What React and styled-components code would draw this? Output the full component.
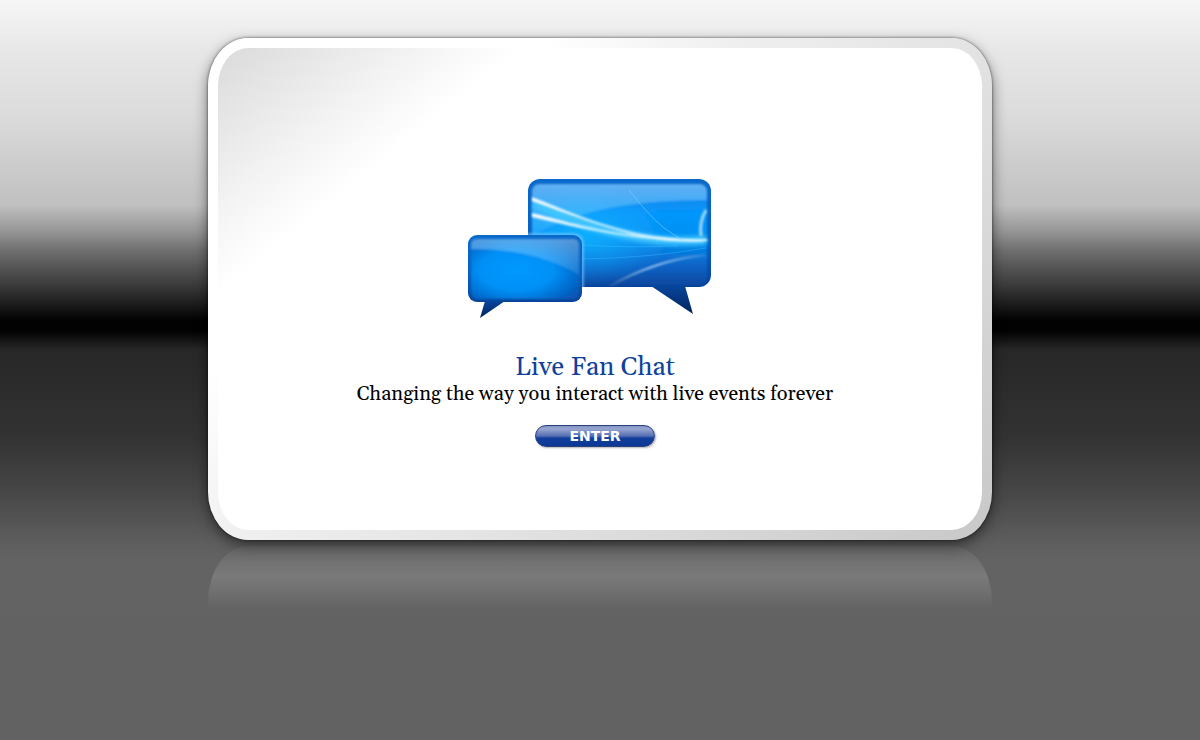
import React from "react";
import styled, { createGlobalStyle } from "styled-components";

const GlobalStyle = createGlobalStyle`
  body {
    margin: 0;
    min-height: 100vh;
    background: #626262 linear-gradient(
      to bottom,
      #f6f6f6 0,
      #e8e8e8 48px,
      #dadada 120px,
      #c0c0c0 205px,
      #989898 230px,
      #6c6c6c 252px,
      #333333 290px,
      #0e0e0e 313px,
      #020202 320px,
      #020202 331px,
      #282828 350px,
      #2b2b2b 380px,
      #333333 438px,
      #484848 495px,
      #5e5e5e 543px,
      #636363 562px,
      #626262 740px
    ) no-repeat;
    font-family: Georgia, Gelasio, 'Liberation Serif', serif;
  }
`;

const Page = styled.div`
  display: flex;
  flex-direction: column;
  align-items: center;
  padding: 38px 16px 0;
`;

const Card = styled.main`
  box-sizing: border-box;
  width: 100%;
  max-width: 784px;
  padding: 10px;
  border-radius: 40px / 48px;
  background: linear-gradient(
    135deg,
    #ffffff 240px,
    #efefef 380px,
    #e4e4e4 540px,
    #cacaca 880px
  );
  box-shadow: 0 0 3px rgba(0, 0, 0, 0.6), 0 5px 14px rgba(0, 0, 0, 0.5);
`;

const Panel = styled.section`
  display: flex;
  flex-direction: column;
  align-items: center;
  padding: 130px 10px 83px 0;
  border-radius: 30px / 38px;
  background: linear-gradient(
    141deg,
    #dcdcdc 10px,
    #e8e8e8 70px,
    #f4f4f4 130px,
    #ffffff 190px
  );
`;

const Logo = styled.svg`
  display: block;
  width: 254px;
  height: 144px;
`;

const Title = styled.h1`
  margin: 32px 0 0;
  font-size: 26px;
  font-weight: normal;
  line-height: 28px;
  color: #0f429b;
`;

const Tagline = styled.p`
  margin: 0;
  font-size: 20px;
  line-height: 24px;
  color: #000;
`;

const EnterButton = styled.button`
  width: 120px;
  height: 22px;
  margin: 19px 0 0;
  padding: 0;
  border: 1px solid #2a417e;
  border-radius: 11px;
  background: linear-gradient(#8794c4 0, #97a5d0 3px, #566eb3 10px, #123f9c 12px, #0b3894 100%);
  box-shadow: 1px 1px 2px rgba(0, 0, 0, 0.3);
  color: #fff;
  font: bold 14px/18px Verdana, 'DejaVu Sans', sans-serif;
  cursor: pointer;
`;

const Reflection = styled.div`
  width: 100%;
  max-width: 784px;
  height: 66px;
  margin-top: 6px;
  border-radius: 40px 40px 0 0 / 56px 56px 0 0;
  background: linear-gradient(
    rgba(255, 255, 255, 0.03) 0,
    rgba(255, 255, 255, 0.15) 30px,
    rgba(255, 255, 255, 0) 64px
  );
`;

function ChatLogo() {
  return (
    <Logo viewBox="0 0 254 144" role="img" aria-label="Live Fan Chat">
      <defs>
        <linearGradient id="big" x1="0" y1="0" x2="0" y2="1">
          <stop offset="0" stopColor="#1a84e6" />
          <stop offset="0.3" stopColor="#0496fb" />
          <stop offset="0.55" stopColor="#0590f2" />
          <stop offset="0.8" stopColor="#0865c8" />
          <stop offset="1" stopColor="#07489f" />
        </linearGradient>
        <radialGradient id="glow" cx="0.3" cy="0.5" r="0.5">
          <stop offset="0" stopColor="#0fb2ff" stopOpacity="0.9" />
          <stop offset="1" stopColor="#12a8ff" stopOpacity="0" />
        </radialGradient>
        <radialGradient id="small" cx="0.42" cy="0.52" r="0.68">
          <stop offset="0" stopColor="#0299ff" />
          <stop offset="0.5" stopColor="#0490f6" />
          <stop offset="1" stopColor="#0756b5" />
        </radialGradient>
        <linearGradient id="rim" x1="0" y1="0" x2="0" y2="1">
          <stop offset="0" stopColor="#0a69ca" />
          <stop offset="0.6" stopColor="#0760c0" />
          <stop offset="1" stopColor="#07439a" />
        </linearGradient>
        <linearGradient id="tail" x1="0" y1="0" x2="0" y2="1">
          <stop offset="0" stopColor="#07459b" />
          <stop offset="1" stopColor="#03235d" />
        </linearGradient>
        <linearGradient id="gloss" x1="0" y1="0" x2="0" y2="1">
          <stop offset="0" stopColor="#a8dcff" stopOpacity="0.5" />
          <stop offset="1" stopColor="#8fd6ff" stopOpacity="0.15" />
        </linearGradient>
        <linearGradient id="ray" x1="0" y1="0" x2="1" y2="0">
          <stop offset="0" stopColor="#fff" stopOpacity="0.95" />
          <stop offset="0.5" stopColor="#d4f2ff" stopOpacity="0.85" />
          <stop offset="1" stopColor="#fff" stopOpacity="0.95" />
        </linearGradient>
        <linearGradient id="arc" x1="0" y1="0" x2="1" y2="0">
          <stop offset="0" stopColor="#fff" stopOpacity="0.05" />
          <stop offset="0.45" stopColor="#bfe4ff" stopOpacity="0.8" />
          <stop offset="1" stopColor="#fff" stopOpacity="0.1" />
        </linearGradient>
        <filter id="halo" x="-10%" y="-30%" width="120%" height="160%">
          <feGaussianBlur stdDeviation="2" />
        </filter>
        <filter id="soft" x="-10%" y="-10%" width="120%" height="120%">
          <feGaussianBlur stdDeviation="0.8" />
        </filter>
        <clipPath id="bigFace">
          <rect x="60" y="1" width="183" height="108" rx="12" />
        </clipPath>
      </defs>

      {/* large bubble */}
      <path d="M183 108H217L225 136Z" fill="url(#tail)" />
      <rect x="60" y="1" width="183" height="108" rx="12" fill="url(#rim)" />
      <g clipPath="url(#bigFace)">
        <g filter="url(#soft)">
          <rect x="64" y="6" width="175" height="101" rx="8" fill="url(#big)" />
          <rect x="64" y="6" width="175" height="101" rx="8" fill="url(#glow)" />
          <path
            d="M64 14Q64 6 72 6H231Q239 6 239 14V22C190 22 140 27 104 40Q78 49 64 58Z"
            fill="url(#gloss)"
          />
        </g>
        <path
          d="M66 26C100 40 135 56 190 62Q215 64 238 62"
          fill="none"
          stroke="#3fc4ff"
          strokeWidth="9"
          filter="url(#halo)"
        />
        <g filter="url(#soft)">
          <path
            d="M64 19C100 33 145 54 195 59Q220 62 239 61V63Q205 65 180 60C140 52 100 36 64 23Z"
            fill="url(#ray)"
          />
          <path
            d="M64 35C100 43 145 60 238 63C175 65 110 50 64 39Z"
            fill="url(#ray)"
          />
          <path
            d="M238 32Q231 44 233 58"
            fill="none"
            stroke="#c9eaff"
            strokeOpacity="0.8"
            strokeWidth="3"
          />
          <path
            d="M140 109C170 92 205 80 238 77"
            fill="none"
            stroke="url(#arc)"
            strokeWidth="2"
          />
        </g>
        <path
          d="M161 12C172 26 182 38 196 50L214 62"
          fill="none"
          stroke="#8fd4ff"
          strokeOpacity="0.5"
        />
        <path
          d="M114 81Q180 80 238 70"
          fill="none"
          stroke="#35b5ff"
          strokeOpacity="0.5"
        />
        <path
          d="M114 67Q160 70 210 68"
          fill="none"
          stroke="#35c5ff"
          strokeOpacity="0.4"
        />
        {/* light edge round the small bubble */}
        <rect
          x="-2"
          y="55"
          width="118"
          height="71"
          rx="10"
          fill="#7cc9ff"
          fillOpacity="0.6"
          filter="url(#soft)"
        />
      </g>

      {/* small bubble */}
      <path d="M17 123H37L12 140Z" fill="url(#tail)" />
      <rect x="0" y="57" width="114" height="67" rx="9" fill="url(#rim)" />
      <g filter="url(#soft)">
        <rect x="3" y="61" width="108" height="60" rx="6" fill="url(#small)" />
        <path
          d="M3 67Q3 61 9 61H105Q111 61 111 67V97C84 80 44 70 3 71Z"
          fill="url(#gloss)"
        />
      </g>
    </Logo>
  );
}

function App() {
  return (
    <>
      <GlobalStyle />
      <Page>
        <Card>
          <Panel>
            <ChatLogo />
            <Title>Live Fan Chat</Title>
            <Tagline>Changing the way you interact with live events forever</Tagline>
            <EnterButton type="button">ENTER</EnterButton>
          </Panel>
        </Card>
        <Reflection />
      </Page>
    </>
  );
}

export default App;
